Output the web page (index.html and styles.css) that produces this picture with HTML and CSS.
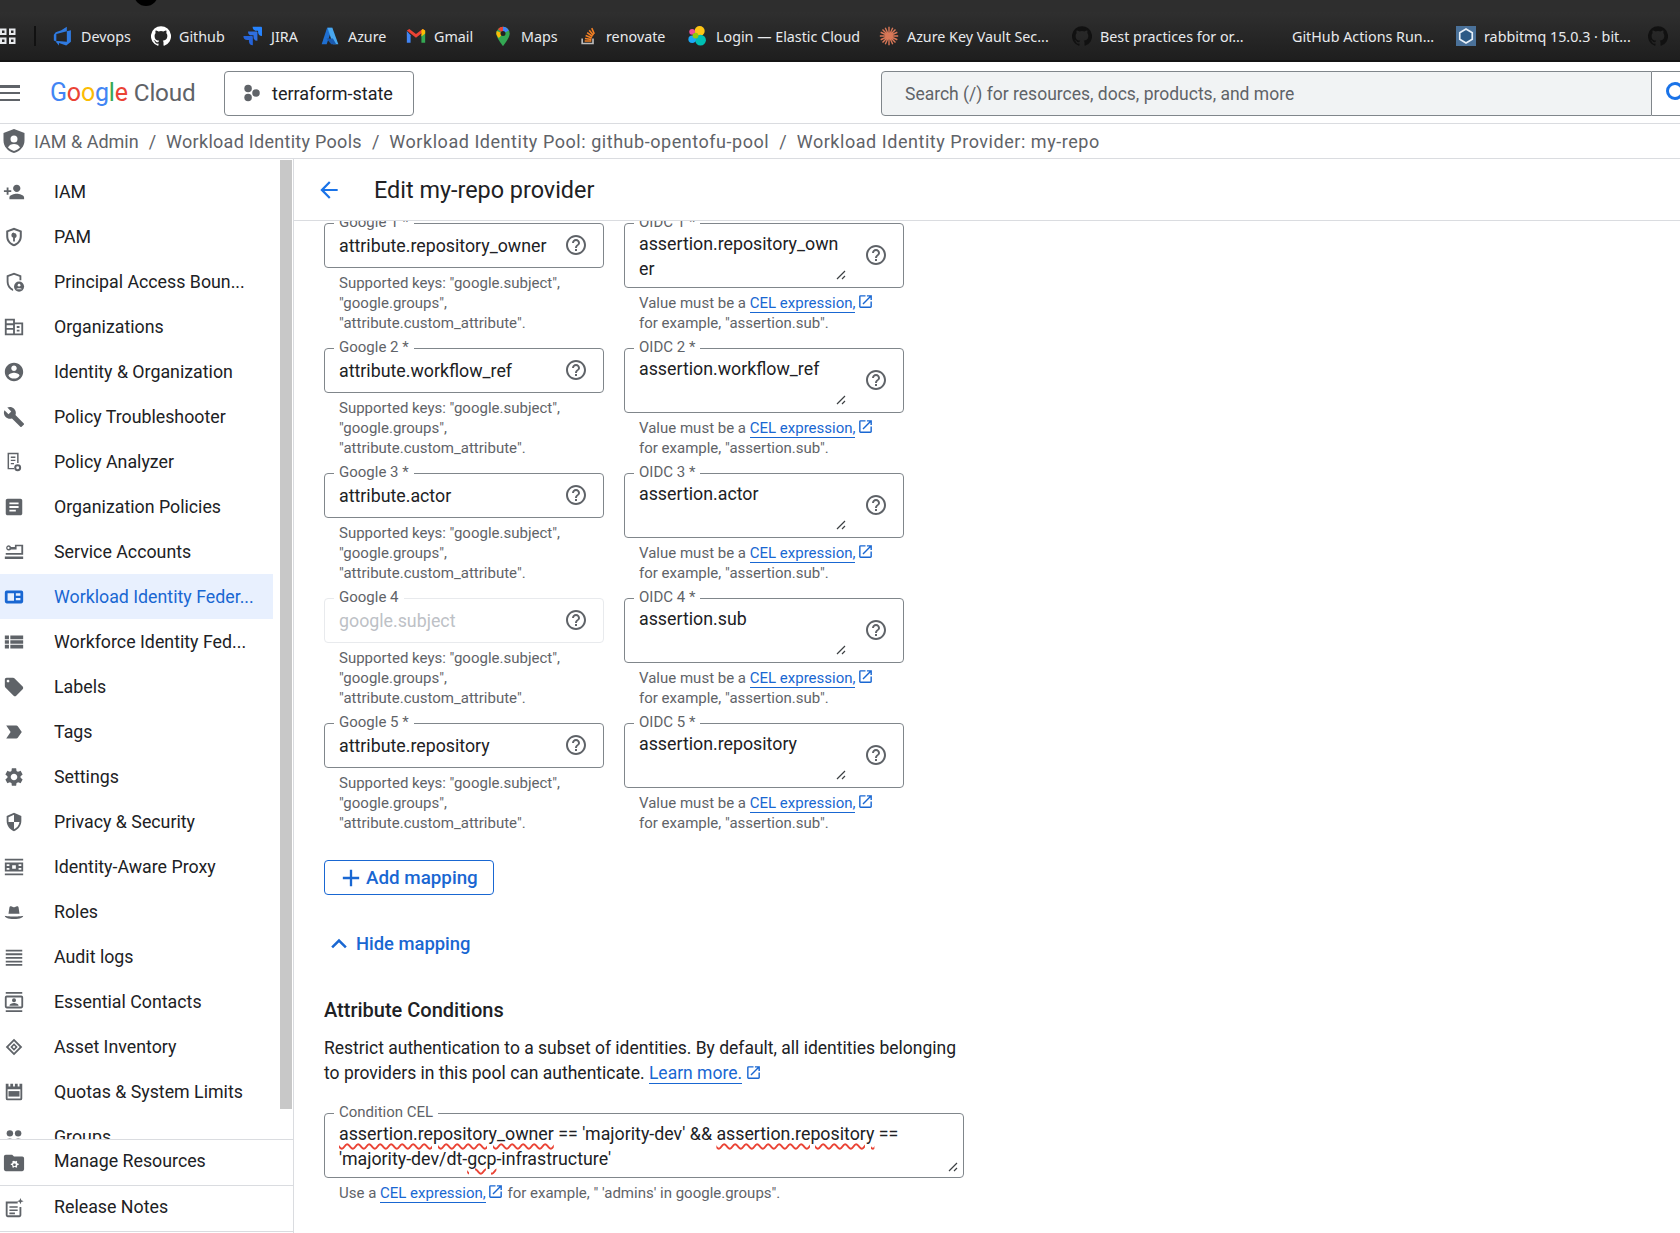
FILE: index.html
```html
<!DOCTYPE html>
<html lang="en">
<head>
<meta charset="utf-8">
<title>Edit my-repo provider</title>
<link rel="stylesheet" href="styles.css">
</head>
<body>
<svg class="defs" width="0" height="0" aria-hidden="true">
  <symbol id="help" viewBox="0 0 24 24"><path d="M11 18h2v-2h-2v2zm1-16C6.48 2 2 6.48 2 12s4.48 10 10 10 10-4.48 10-10S17.52 2 12 2zm0 18c-4.41 0-8-3.59-8-8s3.59-8 8-8 8 3.59 8 8-3.59 8-8 8zm0-14c-2.21 0-4 1.79-4 4h2c0-1.1.9-2 2-2s2 .9 2 2c0 2-3 1.75-3 5h2c0-2.25 3-2.5 3-5 0-2.21-1.79-4-4-4z"/></symbol>
  <symbol id="ext" viewBox="0 0 24 24"><path d="M19 19H5V5h7V3H5a2 2 0 0 0-2 2v14c0 1.1.9 2 2 2h14c1.1 0 2-.9 2-2v-7h-2v7zM14 3v2h3.59l-9.83 9.83 1.41 1.41L19 6.41V10h2V3h-7z"/></symbol>
  <symbol id="octo" viewBox="0 0 24 24"><path d="M12 .3a12 12 0 0 0-3.8 23.4c.6.1.8-.3.8-.6v-2c-3.3.7-4-1.6-4-1.6-.6-1.4-1.4-1.8-1.4-1.8-1-.7.1-.7.1-.7 1.2.1 1.8 1.2 1.8 1.2 1 1.8 2.8 1.3 3.5 1 .1-.8.4-1.3.8-1.6-2.7-.3-5.5-1.3-5.5-6 0-1.2.5-2.3 1.3-3.1-.2-.4-.6-1.6 0-3.2 0 0 1-.3 3.4 1.2a11.5 11.5 0 0 1 6 0c2.3-1.5 3.3-1.2 3.3-1.2.6 1.6.2 2.8 0 3.2.9.8 1.3 1.9 1.3 3.2 0 4.6-2.8 5.6-5.5 5.9.5.4.9 1 .9 2.2v3.3c0 .3.1.7.8.6A12 12 0 0 0 12 .3"/></symbol>
  <symbol id="grip" viewBox="0 0 10 10"><path d="M1 9 9 1M6 9l3-3" fill="none" stroke="#3c4043" stroke-width="1.2"/></symbol>
</svg>

<div class="tabstrip"><div class="omnibox"><span class="avatar"></span></div></div>

<div class="bookmarks">
  <svg class="apps" viewBox="0 0 16 16"><path d="M1 1.5h4.5V6H1zM10 1.5h4.5V6H10zM1 10.5h4.5V15H1zM10 10.5h4.5V15H10z" fill="none" stroke="#e8eaed" stroke-width="2"/></svg>
  <span class="bm-sep"></span>
  <a class="bm bm-devops"><svg viewBox="0 0 24 24"><path d="M21.5 5v14l-5.6 4.5-8.7-3.2v3L2.300 17.600l14.300 1.200V6.400L21.500 5zM16.600 1 10 5 3.300 7.500 1 10.500v6.800l3 1.300V9.600L16.600 6.400V1z" fill="#2f7ae0"/></svg>Devops</a>
  <a class="bm bm-github"><svg class="white"><use href="#octo"/></svg>Github</a>
  <a class="bm bm-jira"><svg viewBox="0 0 24 24"><path d="M22 1H11.500a4.700 4.700 0 0 0 4.700 4.700h1.900v1.900A4.700 4.700 0 0 0 22.800 12V1.800z" fill="#2684ff"/><path d="M16.500 6.500H6a4.700 4.700 0 0 0 4.700 4.700h1.900v1.800a4.700 4.700 0 0 0 4.700 4.700V7.300z" fill="#2f6fe0"/><path d="M11 12H.500a4.700 4.700 0 0 0 4.700 4.700h1.900v1.900a4.700 4.700 0 0 0 4.700 4.400V12.800z" fill="#2563d8"/></svg>JIRA</a>
  <a class="bm bm-azure"><svg viewBox="0 0 24 24"><path d="M8.500 2h6.300L8 22H2z" fill="#1f6fd1"/><path d="M14.800 2 22 22h-6.500L9 2z" fill="#49a8ef"/><path d="M15.500 15H7.500l6 7h6z" fill="#1a5ab0"/></svg>Azure</a>
  <a class="bm bm-gmail"><svg viewBox="0 0 24 24"><path d="M1 6v14h4.500V11z" fill="#4285f4"/><path d="M23 6v14h-4.500V11z" fill="#34a853"/><path d="M1 5.500 12 14l11-8.500L20 3.500l-8 6-8-6z" fill="#ea4335"/><path d="M20 3.500l3 2V9l-4.500 3.500V5z" fill="#fbbc04"/></svg>Gmail</a>
  <a class="bm bm-maps"><svg viewBox="0 0 24 24"><path d="M12 1a8 8 0 0 0-8 8c0 5.500 8 15 8 15s8-9.500 8-15a8 8 0 0 0-8-8z" fill="#34a853"/><path d="M6 3.800A8 8 0 0 1 12 1v8z" fill="#ea4335"/><path d="M12 1a8 8 0 0 1 7 4.500L12 9z" fill="#4285f4"/><path d="M4.500 6 12 9l-5 5.500C5 12 4 10.500 4 9c0-1 .200-2 .500-3z" fill="#fbbc04"/><circle cx="12" cy="9" r="3" fill="#222"/></svg>Maps</a>
  <a class="bm bm-renovate"><svg viewBox="0 0 24 24"><path d="M5 15v6h13v-6" fill="none" stroke="#bcbbbb" stroke-width="2"/><path d="M8 18h8M8.300 15l7.800 1.300M9.200 11.500l7.300 3M11 8l6.400 4.600M13.500 5l5 6M16.500 2.500l3 7" stroke="#f48024" stroke-width="1.900" fill="none"/></svg>renovate</a>
  <a class="bm bm-elastic"><svg viewBox="0 0 24 24"><circle cx="14" cy="6" r="6" fill="#fec514"/><circle cx="5" cy="7" r="3.500" fill="#f04e98"/><circle cx="15" cy="17" r="6.500" fill="#00bfb3"/><circle cx="5" cy="16" r="4.500" fill="#1ba9f5"/><circle cx="9" cy="11.500" r="3.500" fill="#93c90e"/></svg>Login — Elastic Cloud</a>
  <a class="bm bm-kv"><svg viewBox="0 0 24 24"><path d="M12 1v22M1 12h22M4.200 4.200l15.600 15.600M19.800 4.200 4.200 19.800M7.500 2l9 20M16.500 2l-9 20M2 7.500l20 9M22 7.500l-20 9" stroke="#d97757" stroke-width="1.700"/></svg>Azure Key Vault Sec...</a>
  <a class="bm bm-best"><svg class="dark"><use href="#octo"/></svg>Best practices for or...</a>
  <a class="bm bm-actions">GitHub Actions Run...</a>
  <a class="bm bm-rabbit"><svg viewBox="0 0 24 24"><rect width="24" height="24" fill="#4a7199"/><path d="M12 3.500 19.500 8v8L12 20.500 4.500 16V8z" fill="#2c5a85" stroke="#e8f0f8" stroke-width="2"/></svg>rabbitmq 15.0.3 · bit...</a>
  <a class="bm bm-last"><svg class="dark"><use href="#octo"/></svg></a>
</div>

<header class="appbar">
  <button class="menu" aria-label="Menu"><span></span><span></span><span></span></button>
  <div class="logo"><span class="lg-b">G</span><span class="lg-r">o</span><span class="lg-y">o</span><span class="lg-b">g</span><span class="lg-g">l</span><span class="lg-r">e</span><span class="lg-cloud">Cloud</span></div>
  <div class="project">
    <svg viewBox="0 0 24 24"><circle cx="8.500" cy="6.500" r="4.500"/><circle cx="8.500" cy="17.500" r="4.500"/><circle cx="18" cy="12" r="4.500"/></svg>
    <span>terraform-state</span>
  </div>
  <div class="search">
    <div class="search-input">Search (/) for resources, docs, products, and more</div>
    <div class="search-btn"><svg viewBox="0 0 24 24"><circle cx="10" cy="10" r="7.500" fill="none" stroke="#1a73e8" stroke-width="3"/><path d="m15 15 7 7" stroke="#1a73e8" stroke-width="3"/></svg></div>
  </div>
</header>

<nav class="crumbs">
  <svg viewBox="0 0 24 24"><path fill-rule="evenodd" d="M12 0 1.500 4v7.500c0 6 4.400 10.800 10.500 12.500 6.100-1.700 10.500-6.500 10.500-12.500V4zm0 6.500a3.500 3.500 0 1 1 0 7 3.500 3.500 0 0 1 0-7zm-6 12c1-2.500 3.500-3.500 6-3.500s5 1 6 3.500c-1.500 1.500-3.500 2.800-6 3.500-2.500-.7-4.500-2-6-3.500z"/></svg>
  <span>IAM &amp; Admin</span><i>/</i><span class="c2">Workload Identity Pools</span><i>/</i><span class="c3">Workload Identity Pool: github-opentofu-pool</span><i>/</i><span class="c3">Workload Identity Provider: my-repo</span>
</nav>

<div class="body">
  <aside class="sidebar">
    <div class="side-scroll">
      <ul class="side-list">
        <li><svg viewBox="0 0 24 24"><path d="M15 12c2.210 0 4-1.790 4-4s-1.790-4-4-4-4 1.790-4 4 1.790 4 4 4zm-9-2V7H4v3H1v2h3v3h2v-3h3v-2H6zm9 4c-2.670 0-8 1.340-8 4v2h16v-2c0-2.660-5.330-4-8-4z"/></svg>IAM</li>
        <li><svg viewBox="0 0 24 24"><path fill-rule="evenodd" d="M12 2 3.500 5.200v6c0 5.200 3.600 9.700 8.500 10.800 4.900-1.100 8.500-5.600 8.500-10.800v-6zm0 2.300 6.300 2.300v4.700c0 4-2.700 7.500-6.300 8.500-3.600-1-6.300-4.500-6.300-8.500V6.600zm0 2.700a3 3 0 0 0-1 5.800V17h2v-3.700a3 3 0 0 0-1-5.800z"/></svg>PAM</li>
        <li><svg viewBox="0 0 24 24"><path d="M12 2 4 5v6.500c0 4.800 3 9 7 10.300v-2.100c-2.900-1.200-5-4.500-5-8.200V6.400l6-2.300 6 2.300V10h2V5z"/><circle cx="17.500" cy="17" r="5.500"/><circle cx="17.500" cy="15.500" r="1.500" fill="#fff"/><path d="M14.500 20c.5-1.500 5.500-1.500 6 0z" fill="#fff"/></svg>Principal Access Boun...</li>
        <li><svg viewBox="0 0 24 24"><path fill-rule="evenodd" d="M2 3h11v4h9v14H2zm2 2v3h7V5zm0 5v3h7v-3zm0 5v4h7v-4zm9-6v10h7V9zm2 2h3v2h-3zm0 4h3v2h-3z"/></svg>Organizations</li>
        <li><svg viewBox="0 0 24 24"><path d="M12 2C6.480 2 2 6.480 2 12s4.480 10 10 10 10-4.480 10-10S17.520 2 12 2zm0 3c1.660 0 3 1.340 3 3s-1.340 3-3 3-3-1.340-3-3 1.340-3 3-3zm0 14.200c-2.500 0-4.710-1.280-6-3.220.030-1.990 4-3.080 6-3.080 1.990 0 5.970 1.090 6 3.080-1.290 1.940-3.500 3.220-6 3.220z"/></svg>Identity &amp; Organization</li>
        <li><svg viewBox="0 0 24 24"><path d="M22.700 19l-9.100-9.100c.9-2.300.4-5-1.500-6.900-2-2-5-2.400-7.400-1.300L9 6 6 9 1.600 4.700C.4 7.100.9 10.100 2.900 12.100c1.900 1.900 4.600 2.400 6.900 1.500l9.100 9.100c.4.4 1 .4 1.400 0l2.300-2.300c.5-.4.5-1.100.1-1.400z"/></svg>Policy Troubleshooter</li>
        <li><svg viewBox="0 0 24 24"><path fill-rule="evenodd" d="M5 2h12v11h-1.600V3.600H6.600v15H12V20H5zm3.500 4h5v1.500h-5zm0 3.500h5V11h-5zm0 3.500H12v1.500H8.500z"/><path fill-rule="evenodd" d="M16 14.500a3.800 3.800 0 1 1 0 7.600 3.800 3.800 0 0 1 0-7.600zm0 2.200a1.600 1.600 0 1 0 0 3.200 1.600 1.600 0 0 0 0-3.200z"/></svg>Policy Analyzer</li>
        <li><svg viewBox="0 0 24 24"><path d="M19 3H5c-1.100 0-2 .9-2 2v14c0 1.100.9 2 2 2h14c1.100 0 2-.9 2-2V5c0-1.100-.9-2-2-2zm-5 14H7v-2h7v2zm3-4H7v-2h10v2zm0-4H7V7h10v2z"/></svg>Organization Policies</li>
        <li><svg viewBox="0 0 24 24"><path fill-rule="evenodd" d="M6 4.500a3 3 0 0 1 2.800 2H13V4h9v11H3v-1.800h17V5.800h-5.200V9.300H8.800A3 3 0 1 1 6 4.500zm0 1.800a1.200 1.200 0 1 0 0 2.400 1.200 1.200 0 0 0 0-2.400zM2 17h20v2.500H2z"/></svg>Service Accounts</li>
        <li class="active"><svg viewBox="0 0 24 24"><path fill-rule="evenodd" d="M4 5h16a2 2 0 0 1 2 2v10a2 2 0 0 1-2 2H4a2 2 0 0 1-2-2V7a2 2 0 0 1 2-2zm1 3v8h7V8zm9 0v2.500h5V8zm0 5v2.500h5V13z"/></svg><span>Workload Identity Feder...</span></li>
        <li><svg viewBox="0 0 24 24"><path d="M2 14h4.500v-4H2v4zm0 5h4.500v-4H2v4zM2 9h4.500V5H2v4zm6 5h14v-4H8v4zm0 5h14v-4H8v4zM8 5v4h14V5H8z"/></svg>Workforce Identity Fed...</li>
        <li><svg viewBox="0 0 24 24"><path d="M21.410 11.580l-9-9C12.050 2.220 11.550 2 11 2H4c-1.100 0-2 .9-2 2v7c0 .55.22 1.050.59 1.420l9 9c.36.36.86.58 1.410.58.55 0 1.050-.22 1.410-.59l7-7c.37-.36.59-.86.59-1.410 0-.55-.23-1.060-.59-1.420zM5.500 7C4.670 7 4 6.330 4 5.500S4.670 4 5.500 4 7 4.670 7 5.500 6.330 7 5.500 7z"/></svg>Labels</li>
        <li><svg viewBox="0 0 24 24"><path d="M3.500 18.990l11 .01c.67 0 1.270-.33 1.630-.84L20.500 12l-4.370-6.160c-.36-.51-.96-.84-1.630-.84l-11 .01L8.340 12 3.500 18.990z"/></svg>Tags</li>
        <li><svg viewBox="0 0 24 24"><path d="M19.140 12.940c.04-.3.06-.61.06-.94 0-.32-.02-.64-.07-.94l2.030-1.580c.18-.14.23-.41.12-.61l-1.920-3.320c-.12-.22-.37-.29-.59-.22l-2.390.96c-.5-.38-1.030-.7-1.620-.94l-.36-2.540c-.04-.24-.24-.41-.48-.41h-3.840c-.24 0-.43.17-.47.41l-.36 2.540c-.59.24-1.130.57-1.620.94l-2.390-.96c-.22-.08-.47 0-.59.22L2.740 8.870c-.12.21-.08.47.12.61l2.030 1.580c-.05.3-.09.63-.09.94s.02.64.07.94l-2.030 1.580c-.18.14-.23.41-.12.61l1.920 3.320c.12.22.37.29.59.22l2.390-.96c.5.38 1.030.7 1.620.94l.36 2.540c.05.24.24.41.48.41h3.840c.24 0 .44-.17.47-.41l.36-2.540c.59-.24 1.130-.56 1.620-.94l2.390.96c.22.08.47 0 .59-.22l1.920-3.320c.12-.22.07-.47-.12-.61l-2.010-1.580zM12 15.600c-1.980 0-3.600-1.620-3.600-3.600s1.620-3.600 3.600-3.600 3.600 1.620 3.600 3.600-1.620 3.600-3.600 3.600z"/></svg>Settings</li>
        <li><svg viewBox="0 0 24 24"><path d="M12 2 4 5.500v5.500c0 5 3.400 9.500 8 11 4.600-1.500 8-6 8-11V5.500zm0 10h6c-.5 3.500-2.900 6.700-6 7.800V12H6V6.800l6-2.600z"/></svg>Privacy &amp; Security</li>
        <li><svg viewBox="0 0 24 24"><path fill-rule="evenodd" d="M2 3h20v2H2zM2 19h20v2H2zM2 7h20v10H2zm2 2v2h3V9zm0 4v2h3v-2zm13-4v2h3V9zm0 4v2h3v-2zm-7-3v4h4v-4z"/></svg>Identity-Aware Proxy</li>
        <li><svg viewBox="0 0 24 24"><path d="M6 14 7 7c.2-1.300 1.500-1.600 2.500-1 .9.500 2 .9 2.500.9s1.600-.4 2.500-.9c1-.6 2.300-.3 2.500 1l1 7zM2 16c2 .5 4 .8 10 .8s8-.3 10-.8c0 2-3 3.500-10 3.500S2 18 2 16z"/></svg>Roles</li>
        <li><svg viewBox="0 0 24 24"><path d="M3 4h18v2H3zM3 8h18v2H3zM3 12h18v2H3zM3 16h18v2H3zM3 19.500h18v2H3z"/></svg>Audit logs</li>
        <li><svg viewBox="0 0 24 24"><path fill-rule="evenodd" d="M3 1h18v2H3zM3 21h18v2H3zM4 5h16a2 2 0 0 1 2 2v10a2 2 0 0 1-2 2H4a2 2 0 0 1-2-2V7a2 2 0 0 1 2-2zm0 2v10h16V7zm8 .8a2.200 2.200 0 1 1 0 4.400 2.200 2.200 0 0 1 0-4.400zM7 16c0-2 3-3 5-3s5 1 5 3z"/></svg>Essential Contacts</li>
        <li><svg viewBox="0 0 24 24"><path d="M12 3 21 12 12 21 3 12zm0 2.800L5.800 12l6.200 6.200 6.200-6.200zM12 8l4 4-4 4-4-4zm0 2.400L10.400 12l1.600 1.600 1.600-1.600z" fill-rule="evenodd"/></svg>Asset Inventory</li>
        <li><svg viewBox="0 0 24 24"><path fill-rule="evenodd" d="M3 3h3v3h2V3h3v3h2V3h3v3h2V3h3v16a2 2 0 0 1-2 2H5a2 2 0 0 1-2-2zm2 6v10h14V9z"/><path d="M6 11h12v6H6z"/></svg>Quotas &amp; System Limits</li>
        <li><svg viewBox="0 0 24 24"><circle cx="7.500" cy="8" r="3.500"/><circle cx="16.500" cy="8" r="3.500"/><path d="M1 18c0-3 4-4.500 6.500-4.500S12 15 12 18zM12 18c0-3 2-4.500 4.500-4.500S23 15 23 18z"/></svg>Groups</li>
      </ul>
      <div class="gutter"><div class="thumb"></div></div>
    </div>
    <ul class="side-foot">
      <li><svg viewBox="0 0 24 24"><path fill-rule="evenodd" d="M3 4h7l2 2h9a2 2 0 0 1 2 2v12a2 2 0 0 1-2 2H3a2 2 0 0 1-2-2V6a2 2 0 0 1 2-2zm9 6.500-1 .4-.9.5.3 1.200-.7 1-1.200.2v1.400l1.200.2.7 1-.3 1.200 1.200.7.9-.8 1.200.0.9.8 1.200-.7-.3-1.200.7-1 1.200-.2v-1.400l-1.200-.2-.7-1 .3-1.200-1.200-.7-.9.8zm.500 3a1.500 1.500 0 1 1 0 3 1.500 1.500 0 0 1 0-3z"/></svg>Manage Resources</li>
      <li><svg viewBox="0 0 24 24"><path fill-rule="evenodd" d="M3 5h13v2H5v13h13V11h2v9a2 2 0 0 1-2 2H5a2 2 0 0 1-2-2zM7 10h9v1.800H7zm0 3.500h9v1.800H7zm0 3.500h6v1.800H7zM19 1l1 2.500 2.500 1-2.500 1L19 8l-1-2.500-2.500-1 2.500-1z"/></svg>Release Notes</li>
    </ul>
  </aside>

  <main class="main">
    <div class="page-head">
      <svg viewBox="0 0 24 24"><path d="M20 11H7.830l5.590-5.590L12 4l-8 8 8 8 1.410-1.410L7.830 13H20v-2z"/></svg>
      <h1>Edit my-repo provider</h1>
    </div>
    <div class="form">
      <div class="map-grid">
        <div class="cell">
          <div class="field"><label>Google 1 *</label><span class="val">attribute.repository_owner</span><svg class="help"><use href="#help"/></svg></div>
          <p class="hint">Supported keys: "google.subject",<br>"google.groups",<br>"attribute.custom_attribute".</p>
        </div>
        <div class="cell">
          <div class="field tall"><label>OIDC 1 *</label><span class="val">assertion.repository_owner</span><svg class="grip"><use href="#grip"/></svg><svg class="help"><use href="#help"/></svg></div>
          <p class="hint">Value must be a <a>CEL expression,</a><svg class="ext"><use href="#ext"/></svg><br>for example, "assertion.sub".</p>
        </div>
        <div class="cell">
          <div class="field"><label>Google 2 *</label><span class="val">attribute.workflow_ref</span><svg class="help"><use href="#help"/></svg></div>
          <p class="hint">Supported keys: "google.subject",<br>"google.groups",<br>"attribute.custom_attribute".</p>
        </div>
        <div class="cell">
          <div class="field tall"><label>OIDC 2 *</label><span class="val">assertion.workflow_ref</span><svg class="grip"><use href="#grip"/></svg><svg class="help"><use href="#help"/></svg></div>
          <p class="hint">Value must be a <a>CEL expression,</a><svg class="ext"><use href="#ext"/></svg><br>for example, "assertion.sub".</p>
        </div>
        <div class="cell">
          <div class="field"><label>Google 3 *</label><span class="val">attribute.actor</span><svg class="help"><use href="#help"/></svg></div>
          <p class="hint">Supported keys: "google.subject",<br>"google.groups",<br>"attribute.custom_attribute".</p>
        </div>
        <div class="cell">
          <div class="field tall"><label>OIDC 3 *</label><span class="val">assertion.actor</span><svg class="grip"><use href="#grip"/></svg><svg class="help"><use href="#help"/></svg></div>
          <p class="hint">Value must be a <a>CEL expression,</a><svg class="ext"><use href="#ext"/></svg><br>for example, "assertion.sub".</p>
        </div>
        <div class="cell">
          <div class="field disabled"><label>Google 4</label><span class="val">google.subject</span><svg class="help"><use href="#help"/></svg></div>
          <p class="hint">Supported keys: "google.subject",<br>"google.groups",<br>"attribute.custom_attribute".</p>
        </div>
        <div class="cell">
          <div class="field tall"><label>OIDC 4 *</label><span class="val">assertion.sub</span><svg class="grip"><use href="#grip"/></svg><svg class="help"><use href="#help"/></svg></div>
          <p class="hint">Value must be a <a>CEL expression,</a><svg class="ext"><use href="#ext"/></svg><br>for example, "assertion.sub".</p>
        </div>
        <div class="cell">
          <div class="field"><label>Google 5 *</label><span class="val">attribute.repository</span><svg class="help"><use href="#help"/></svg></div>
          <p class="hint">Supported keys: "google.subject",<br>"google.groups",<br>"attribute.custom_attribute".</p>
        </div>
        <div class="cell">
          <div class="field tall"><label>OIDC 5 *</label><span class="val">assertion.repository</span><svg class="grip"><use href="#grip"/></svg><svg class="help"><use href="#help"/></svg></div>
          <p class="hint">Value must be a <a>CEL expression,</a><svg class="ext"><use href="#ext"/></svg><br>for example, "assertion.sub".</p>
        </div>
      </div>

      <button class="add-btn"><svg viewBox="0 0 24 24"><path d="M19 13h-6v6h-2v-6H5v-2h6V5h2v6h6v2z"/></svg>Add mapping</button>
      <button class="hide-btn"><svg viewBox="0 0 24 24"><path d="M6.500 15.500 12 10l5.500 5.500" fill="none" stroke="#1967d2" stroke-width="2"/></svg>Hide mapping</button>

      <h2>Attribute Conditions</h2>
      <p class="desc">Restrict authentication to a subset of identities. By default, all identities belonging to providers in this pool can authenticate. <a>Learn more.</a><svg class="ext big"><use href="#ext"/></svg></p>
      <div class="field cel"><label>Condition CEL</label><span class="val"><u>assertion.repository_owner</u> == 'majority-dev' &amp;&amp; <u>assertion.repository</u> == 'majority-dev/dt-<u>gcp</u>-infrastructure'</span><svg class="grip"><use href="#grip"/></svg></div>
      <p class="hint cel-hint">Use a <a>CEL expression,</a><svg class="ext"><use href="#ext"/></svg> for example, " 'admins' in google.groups".</p>
    </div>
  </main>
</div>
</body>
</html>
```

FILE: styles.css
```css
* { box-sizing: border-box; }
html, body { margin: 0; height: 1233px; overflow: hidden; }
body { font-family: Roboto, "Liberation Sans", sans-serif; color: #202124; background: #fff; display: flex; flex-direction: column; }
.defs { position: absolute; }
ul { list-style: none; margin: 0; padding: 0; }
button { font: inherit; background: none; border: 0; padding: 0; }

.tabstrip { height: 12px; background: #2e2e2e; padding-left: 128px; overflow: hidden; flex: none; }
.omnibox { height: 12px; background: #202124; border-bottom-left-radius: 12px; padding-left: 6px; }
.avatar { display: block; width: 24px; height: 24px; margin-top: -18px; border-radius: 50%; background: #000; }

.bookmarks { height: 50px; flex: none; display: flex; align-items: center; background: linear-gradient(#2f2f2f, #1e1e1e); border-bottom: 2px solid #141414; color: #e8eaed; font: 14.300px "Noto Sans", sans-serif; white-space: nowrap; overflow: hidden; }
.apps { width: 16px; height: 16px; flex: none; }
.bm-sep { width: 2px; height: 20px; background: #111; margin-left: 18px; flex: none; }
.bm { display: flex; align-items: center; gap: 8px; flex: none; }
.bm svg { width: 20px; height: 20px; flex: none; }
.bm svg.white { fill: #fff; }
.bm svg.dark { fill: #111; }
.bm-devops { margin-left: 17px; width: 98px; }
.bm-github { width: 92px; }
.bm-jira { width: 77px; }
.bm-azure { width: 86px; }
.bm-gmail { width: 87px; }
.bm-maps { width: 85px; }
.bm-renovate { width: 110px; }
.bm-elastic { width: 191px; }
.bm-kv { width: 193px; }
.bm-best { width: 220px; }
.bm-actions { width: 164px; }
.bm-rabbit { width: 192px; }

.appbar { height: 62px; flex: none; display: flex; align-items: center; border-bottom: 1px solid #dadce0; padding-top: 1px; }
.menu { width: 20px; height: 16px; display: flex; flex-direction: column; justify-content: space-between; flex: none; }
.menu span { display: block; height: 2.500px; background: #5f6368; }
.logo { margin: -2px 0 0 30px; width: 174px; font-size: 25px; flex: none; letter-spacing: -.2px; white-space: nowrap; }
.lg-b { color: #4285f4; } .lg-r { color: #ea4335; } .lg-y { color: #fbbc04; } .lg-g { color: #34a853; }
.lg-cloud { color: #5f6368; margin-left: 6px; font-size: 24.300px; }
.project { width: 190px; height: 45px; flex: none; border: 1px solid #80868b; border-radius: 4px; display: flex; align-items: center; gap: 11px; padding-left: 16px; font-size: 18px; }
.project svg { width: 20px; height: 20px; fill: #5f6368; }
.search { flex: 1; margin-left: 467px; height: 45px; display: flex; }
.search-input { width: 771px; background: #f1f3f4; border: 1px solid #80868b; border-radius: 4px 0 0 4px; padding: 1px 0 0 23px; display: flex; align-items: center; color: #5f6368; font-size: 17.500px; }
.search-btn { flex: 1; border: 1px solid #80868b; border-width: 1px 0; padding: 9px 0 0 13px; overflow: hidden; }
.search-btn svg { width: 24px; height: 24px; display: block; }

.crumbs { height: 35px; flex: none; display: flex; align-items: center; border-bottom: 1px solid #dadce0; padding-left: 2px; color: #5f6368; font-size: 18px; white-space: nowrap; }
.crumbs svg { width: 24px; height: 24px; fill: #5f6368; margin-right: 8px; flex: none; }
.crumbs i { font-style: normal; margin: 0 10px; }
.crumbs .c2 { letter-spacing: .28px; }
.crumbs .c3 { letter-spacing: .54px; }

.body { flex: 1; min-height: 0; display: flex; }
.sidebar { width: 294px; flex: none; border-right: 1px solid #dadce0; display: flex; flex-direction: column; }
.side-scroll { height: 980px; flex: none; display: flex; overflow: hidden; }
.side-list { width: 280px; flex: none; padding: 10px 7px 0 0; }
.side-list li, .side-foot li { display: flex; align-items: center; gap: 29px; padding-left: 3px; height: 45px; font-size: 17.800px; white-space: nowrap; }
.sidebar svg { width: 22px; height: 22px; fill: #5f6368; flex: none; }
.side-list li.active { background: #e8f0fe; color: #1967d2; }
.side-list li.active svg { fill: #1967d2; }
.gutter { width: 13px; flex: none; padding-top: 1px; }
.thumb { width: 12px; height: 949px; background: #c8c8c8; }
.side-foot li { height: 46px; border-top: 1px solid #dadce0; padding-bottom: 5px; }
.side-foot li svg { margin-top: 3px; }
.side-foot li:last-child { border-bottom: 1px solid #dadce0; height: 47px; }

.main { flex: 1; min-width: 0; display: flex; flex-direction: column; }
.page-head { height: 62px; flex: none; display: flex; align-items: center; border-bottom: 1px solid #dadce0; padding-left: 22px; }
.page-head svg { width: 26px; height: 26px; fill: #1a73e8; flex: none; }
.page-head h1 { margin: 0 0 0 32px; font-size: 23.400px; font-weight: 400; }
.form { flex: 1; min-height: 0; overflow: hidden; padding: 2px 0 0 30px; }
.map-grid { display: grid; grid-template-columns: 280px 280px; column-gap: 20px; row-gap: 15px; }
.cell { height: 110px; }

.field { position: relative; height: 45px; border: 1px solid #80868b; border-radius: 4px; padding: 0 50px 0 14px; display: flex; align-items: center; font-size: 17.800px; }
.field label { position: absolute; top: -12px; left: 9px; padding: 0 5px; background: #fff; color: #5f6368; font-size: 15px; line-height: 20px; }
.help { position: absolute; right: 15px; top: 50%; margin-top: -13px; width: 24px; height: 24px; fill: #5f6368; }
.grip { position: absolute; width: 10px; height: 10px; right: 57px; bottom: 7px; }
.field.tall { height: 65px; align-items: flex-start; padding: 7px 60px 0 14px; line-height: 25px; }
.field.tall .val { word-break: break-all; }
.field.disabled { border-color: #e8eaed; color: #bdc1c6; }
.hint { margin: 5px 0 0; padding-left: 15px; font-size: 15px; line-height: 20px; color: #5f6368; }
.hint a, .desc a { color: #1967d2; border-bottom: 1px solid #1967d2; }
.ext { width: 17px; height: 17px; margin-left: 2px; fill: #1967d2; vertical-align: -2px; }
.ext.big { width: 17px; height: 17px; margin-left: 3px; vertical-align: -2px; }

.add-btn { display: flex; align-items: center; gap: 1px; width: 170px; height: 35px; margin-top: 27px; border: 1px solid #1967d2; border-radius: 4px; padding-left: 12px; color: #1967d2; font-weight: 500; font-size: 18.800px; }
.add-btn svg { width: 28px; height: 28px; fill: #1967d2; flex: none; }
.hide-btn { display: flex; align-items: center; gap: 2px; margin-top: 32px; padding-left: 0; height: 32px; color: #1967d2; font-weight: 500; font-size: 18.400px; }
.hide-btn svg { width: 30px; height: 30px; flex: none; }
h2 { margin: 37px 0 0; font-size: 20px; font-weight: 500; line-height: 28px; }
.desc { width: 650px; margin: 12px 0 0; font-size: 17.500px; line-height: 25px; }
.field.cel { width: 640px; height: 65px; margin-top: 27px; align-items: flex-start; padding: 7px 20px 0 14px; line-height: 25px; }
.cel u { text-decoration: underline wavy #ea4335 1.500px; text-underline-offset: 3px; }
.cel .grip { right: 5px; bottom: 5px; }
.hint.cel-hint { margin-top: 5px; }
.cel-hint .ext { margin-left: 1px; }
```
